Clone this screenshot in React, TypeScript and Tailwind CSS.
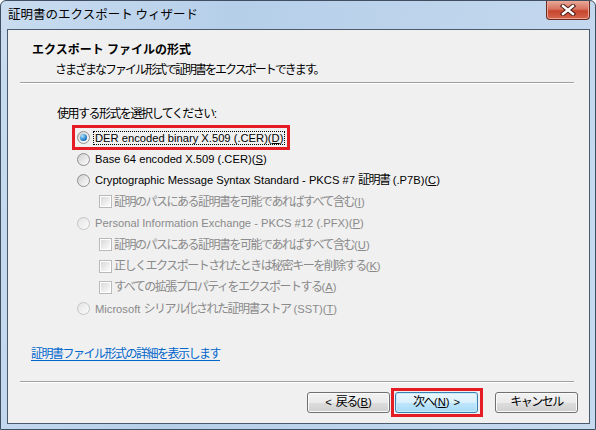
import React from 'react';
import clsx from 'clsx';

// Windows 7 style certificate export wizard

const J = ({ children }: { children: React.ReactNode }) => (
  <span className="text-[12px] tracking-[-1.5px]">{children}</span>
);

const Key = ({ children }: { children: React.ReactNode }) => (
  <span className="underline underline-offset-[1px]">{children}</span>
);

function Radio({ checked, disabled }: { checked?: boolean; disabled?: boolean }) {
  return (
    <span
      className={clsx(
        'flex h-[13px] w-[13px] shrink-0 items-center justify-center rounded-full border',
        disabled
          ? 'border-[#c5c5c5] bg-[linear-gradient(135deg,#e4e4e4,#fbfbfb)]'
          : 'border-[#8f8f8f] bg-[linear-gradient(135deg,#cfcfcf,#ffffff)]'
      )}
    >
      {checked && (
        <span className="h-[7px] w-[7px] rounded-full bg-[radial-gradient(circle_at_35%_30%,#b4e2fb,#2a86cf_55%,#0d4a86)]" />
      )}
    </span>
  );
}

function Check() {
  return (
    <span className="flex h-[13px] w-[13px] shrink-0 items-center justify-center border border-[#b9b9b9] bg-white">
      <span className="h-[9px] w-[9px] bg-[linear-gradient(135deg,#d9d9d9,#fbfbfb)]" />
    </span>
  );
}

function RadioRow({
  children,
  checked,
  disabled,
  focus,
}: {
  children: React.ReactNode;
  checked?: boolean;
  disabled?: boolean;
  focus?: boolean;
}) {
  return (
    <div className="relative flex h-[21.4px] items-center pl-[69px]">
      <Radio checked={checked} disabled={disabled} />
      <span
        className={clsx(
          'ml-[3px] whitespace-nowrap px-px text-[11.2px] leading-[12px]',
          disabled ? 'text-[#8a8a8a]' : 'text-black',
          focus ? 'border border-dotted border-black' : 'border border-transparent'
        )}
      >
        {children}
      </span>
      {focus && (
        <span className="pointer-events-none absolute left-[64px] top-[-2px] h-[25px] w-[218px] border-[3px] border-[#e51c24]" />
      )}
    </div>
  );
}

function CheckRow({ children }: { children: React.ReactNode }) {
  return (
    <div className="flex h-[21.4px] items-center pl-[91px]">
      <Check />
      <span className="ml-[2px] whitespace-nowrap text-[11.2px] text-[#8a8a8a]">{children}</span>
    </div>
  );
}

function Button({ children, primary }: { children: React.ReactNode; primary?: boolean }) {
  return (
    <button
      className={clsx(
        'flex h-[21px] w-[83px] items-center justify-center rounded-[3px] border text-[11.2px] text-black',
        primary
          ? 'border-[#3c7fb1] bg-[linear-gradient(to_bottom,#eaf6fd_0%,#d9f0fc_50%,#bee6fd_51%,#a9dbf6_100%)] shadow-[inset_0_0_0_1px_#c9ecfc]'
          : 'border-[#707070] bg-[linear-gradient(to_bottom,#f2f2f2_0%,#ebebeb_50%,#dddddd_51%,#cfcfcf_100%)] shadow-[inset_0_0_0_1px_#fbfbfb]'
      )}
    >
      {children}
    </button>
  );
}

export default function App() {
  return (
    <div
      className="flex h-[430px] w-[596px] flex-col overflow-hidden rounded-t-[6px] border border-[#3f4f61] bg-[linear-gradient(100deg,#c9dcf0_0%,#b6cfe9_35%,#bcd3eb_60%,#c6daef_100%)] text-[12px] text-black"
      style={{ fontFamily: '"Liberation Sans", "Noto Sans CJK JP", sans-serif' }}
    >
      {/* Title bar */}
      <div className="flex h-[28px] shrink-0 items-start">
        <span className="pl-[7px] pt-[5px] text-[12.5px] leading-[16px] text-black" style={{ fontFamily: '"Noto Sans CJK JP", sans-serif' }}>
          証明書のエクスポート ウィザード
        </span>
        <div className="ml-auto mr-[5px] flex h-[19px] w-[44px] items-center justify-center rounded-b-[4px] border border-t-0 border-[#6b2a20] bg-[linear-gradient(to_bottom,#e9a899_0%,#d8735f_45%,#c6452e_55%,#d6664d_100%)] shadow-[inset_0_0_0_1px_#eba795]">
          <svg width="18" height="12" viewBox="0 0 18 12">
            <path d="M4 2 L14 10 M14 2 L4 10" stroke="#4a1a12" strokeWidth="4.4" strokeLinecap="square" />
            <path d="M4 2 L14 10 M14 2 L4 10" stroke="#ffffff" strokeWidth="2.4" strokeLinecap="square" />
          </svg>
        </div>
      </div>

      {/* Client area */}
      <div className="mb-[5px] ml-[6px] mr-[5px] flex flex-1 flex-col border border-[#4a5b6d] bg-[#f0f0f0]">
        <div className="pl-[24px] pt-[12px] text-[12px] font-bold leading-[16px]">エクスポート ファイルの形式</div>
        <div className="mt-[4px] pl-[47px] leading-[16px]">
          <span className="tracking-[-2px]">さまざまなファイル形式で証明書をエクスポートできます。</span>
        </div>
        <div className="ml-[12px] mr-[15px] mt-[4px] h-[2px] border-t border-b border-t-[#a0a0a0] border-b-white" />

        <div className="mt-[22px] pl-[49px] leading-[16px]">
          <J>使用する形式を選択してください:</J>
        </div>

        <div className="mt-[5px] flex flex-col">
          <RadioRow checked focus>
            DER encoded binary X.509 (.CER)(<Key>D</Key>)
          </RadioRow>
          <RadioRow>
            Base 64 encoded X.509 (.CER)(<Key>S</Key>)
          </RadioRow>
          <RadioRow>
            Cryptographic Message Syntax Standard - PKCS #7 <J>証明書</J> (.P7B)(<Key>C</Key>)
          </RadioRow>
          <CheckRow>
            <J>証明のパスにある証明書を可能であればすべて含む</J>(<Key>I</Key>)
          </CheckRow>
          <RadioRow disabled>
            Personal Information Exchange - PKCS #12 (.PFX)(<Key>P</Key>)
          </RadioRow>
          <CheckRow>
            <J>証明のパスにある証明書を可能であればすべて含む</J>(<Key>U</Key>)
          </CheckRow>
          <CheckRow>
            <J>正しくエクスポートされたときは秘密キーを削除する</J>(<Key>K</Key>)
          </CheckRow>
          <CheckRow>
            <J>すべての拡張プロパティをエクスポートする</J>(<Key>A</Key>)
          </CheckRow>
          <RadioRow disabled>
            Microsoft <J>シリアル化された証明書ストア</J> (SST)(<Key>T</Key>)
          </RadioRow>
        </div>

        <div className="mt-[26px] pl-[23px] leading-[16px]">
          <a className="text-[#0066cc] underline underline-offset-[2px]">
            <J>証明書ファイル形式の詳細を表示します</J>
          </a>
        </div>

        <div className="ml-[12px] mr-[15px] mt-[19px] h-[2px] border-t border-b border-t-[#a0a0a0] border-b-white" />

        <div className="mt-[5px] flex items-center justify-end pr-[11px]">
          <Button>
            <span className="mr-[4px]">&lt;</span>
            <J>戻る</J>(<Key>B</Key>)
          </Button>
          <div className="ml-px border-[3px] border-[#e51c24] py-px pl-px pr-[2px]">
            <Button primary>
              <J>次へ</J>(<Key>N</Key>)
              <span className="ml-[4px]">&gt;</span>
            </Button>
          </div>
          <div className="ml-[12px]">
            <Button>
              <J>キャンセル</J>
            </Button>
          </div>
        </div>
      </div>
    </div>
  );
}
